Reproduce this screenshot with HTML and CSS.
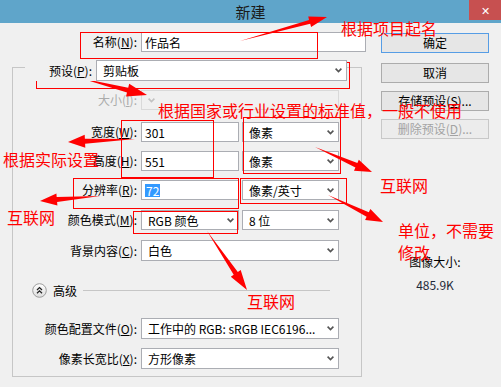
FILE: index.html
```html
<!DOCTYPE html>
<html lang="zh-CN">
<head>
    <meta charset="UTF-8">
    <meta name="viewport" content="width=device-width, initial-scale=1.0">
    <title>新建</title>
    <link rel="stylesheet" href="styles.css">
</head>
<body>
<div class="window">
    <div class="titlebar">
        <span class="title">新建</span>
        <span class="close">✕</span>
    </div>

    <div class="dialog">
        <div class="form">
            <div class="row row-name">
                <span class="lbl">名称(<u>N</u>):</span>
                <div class="field name-field">作品名</div>
            </div>

            <div class="row row-preset">
                <span class="lbl">预设(<u>P</u>):</span>
                <div class="field select preset-field">剪贴板
                    <svg class="chev" viewBox="0 0 7 5"><path d="M0.6 0.6 L3.5 3.6 L6.4 0.6"/></svg>
                </div>
            </div>

            <div class="group">
                <div class="row row-size">
                    <span class="lbl muted">大小(<u>I</u>):</span>
                    <div class="field select w-full off">
                        <svg class="chev" viewBox="0 0 7 5"><path d="M0.6 0.6 L3.5 3.6 L6.4 0.6"/></svg>
                    </div>
                </div>
                <div class="row row-w">
                    <span class="lbl">宽度(<u>W</u>):</span>
                    <div class="field w-half">301</div>
                    <div class="field select w-unit">像素
                        <svg class="chev" viewBox="0 0 7 5"><path d="M0.6 0.6 L3.5 3.6 L6.4 0.6"/></svg>
                    </div>
                </div>
                <div class="row row-h">
                    <span class="lbl">高度(<u>H</u>):</span>
                    <div class="field w-half">551</div>
                    <div class="field select w-unit">像素
                        <svg class="chev" viewBox="0 0 7 5"><path d="M0.6 0.6 L3.5 3.6 L6.4 0.6"/></svg>
                    </div>
                </div>
                <div class="row row-res">
                    <span class="lbl">分辨率(<u>R</u>):</span>
                    <div class="field w-half"><span class="picked">72</span></div>
                    <div class="field select w-unit">像素/英寸
                        <svg class="chev" viewBox="0 0 7 5"><path d="M0.6 0.6 L3.5 3.6 L6.4 0.6"/></svg>
                    </div>
                </div>
                <div class="row row-mode">
                    <span class="lbl">颜色模式(<u>M</u>):</span>
                    <div class="field select w-half">RGB 颜色
                        <svg class="chev" viewBox="0 0 7 5"><path d="M0.6 0.6 L3.5 3.6 L6.4 0.6"/></svg>
                    </div>
                    <div class="field select w-unit">8 位
                        <svg class="chev" viewBox="0 0 7 5"><path d="M0.6 0.6 L3.5 3.6 L6.4 0.6"/></svg>
                    </div>
                </div>
                <div class="row row-bg tall">
                    <span class="lbl">背景内容(<u>C</u>):</span>
                    <div class="field select w-full">白色
                        <svg class="chev" viewBox="0 0 7 5"><path d="M0.6 0.6 L3.5 3.6 L6.4 0.6"/></svg>
                    </div>
                </div>

                <div class="row row-adv">
                    <svg class="toggle" viewBox="0 0 15 15">
                        <defs>
                            <linearGradient id="knob" x1="0" y1="0" x2="0" y2="1">
                                <stop offset="0" stop-color="#ffffff"/>
                                <stop offset="1" stop-color="#dcdcdc"/>
                            </linearGradient>
                        </defs>
                        <circle cx="7.5" cy="7.5" r="6.8" fill="url(#knob)" stroke="#9c9c9c"/>
                        <path d="M5 7 L7.5 4.6 L10 7 M5 10.2 L7.5 7.8 L10 10.2" fill="none" stroke="#222" stroke-width="1.3"/>
                    </svg>
                    <span class="adv-label">高级</span>
                    <span class="adv-line"></span>
                </div>

                <div class="row row-profile tall">
                    <span class="lbl">颜色配置文件(<u>O</u>):</span>
                    <div class="field select w-full">工作中的 RGB: sRGB IEC6196...
                        <svg class="chev" viewBox="0 0 7 5"><path d="M0.6 0.6 L3.5 3.6 L6.4 0.6"/></svg>
                    </div>
                </div>
                <div class="row row-ratio tall">
                    <span class="lbl">像素长宽比(<u>X</u>):</span>
                    <div class="field select w-full">方形像素
                        <svg class="chev" viewBox="0 0 7 5"><path d="M0.6 0.6 L3.5 3.6 L6.4 0.6"/></svg>
                    </div>
                </div>
            </div>
        </div>

        <div class="side">
            <div class="btn btn-ok">确定</div>
            <div class="btn btn-cancel">取消</div>
            <div class="btn btn-save">存储预设(<u>S</u>)...</div>
            <div class="btn btn-del">删除预设(<u>D</u>)...</div>
            <div class="info">图像大小:</div>
            <div class="info info-size">485.9K</div>
        </div>
    </div>

    <!-- red annotations drawn on top of the screenshot -->
    <div class="notes">
        <svg id="marks" class="marks" width="501" height="387" viewBox="0 0 501 387">
            <rect x="80.5" y="32.5" width="237" height="26"/>
            <rect x="36.5" y="62.5" width="313" height="26"/>
            <rect x="121.5" y="120.5" width="92" height="57"/>
            <rect x="243.5" y="117.5" width="97" height="56"/>
            <rect x="73.5" y="178.5" width="165" height="30"/>
            <rect x="240.5" y="178.5" width="106" height="25"/>
            <rect x="133.5" y="211.5" width="104" height="22"/>
        </svg>
        <div class="note n-name">根据项目起名</div>
        <div class="note n-preset">根据国家或行业设置的标准值，一般不使用</div>
        <div class="note n-size">根据实际设置</div>
        <div class="note n-res">互联网</div>
        <div class="note n-unit">互联网</div>
        <div class="note n-resunit">单位，不需要<br>修改</div>
        <div class="note n-mode">互联网</div>
    </div>
</div>

<script>
    // x1, y1 (tail), x2, y2 (tip), shaft width, head width, head length
    const arrows = [
        [240, 41, 327, 17, 4, 11, 18],
        [80, 78, 147, 95, 5, 13, 20],
        [135, 139, 68, 142, 5, 13, 17],
        [100, 196, 40, 201, 5, 12, 17],
        [315, 147, 372, 172, 5, 12, 17],
        [328, 195, 383, 222, 5, 12, 17],
        [207, 231, 247, 290, 5, 12, 20]
    ];

    const marks = document.getElementById('marks');

    arrows.forEach(([x1, y1, x2, y2, shaft, head, len]) => {
        const d = Math.hypot(x2 - x1, y2 - y1);
        const ux = (x2 - x1) / d, uy = (y2 - y1) / d;
        const nx = -uy, ny = ux;
        const bx = x2 - ux * len, by = y2 - uy * len;
        const pts = [
            [x1, y1],
            [bx + nx * shaft / 2, by + ny * shaft / 2],
            [bx + nx * head / 2, by + ny * head / 2],
            [x2, y2],
            [bx - nx * head / 2, by - ny * head / 2],
            [bx - nx * shaft / 2, by - ny * shaft / 2]
        ];
        const poly = document.createElementNS('http://www.w3.org/2000/svg', 'polygon');
        poly.setAttribute('points', pts.map(p => p[0].toFixed(1) + ',' + p[1].toFixed(1)).join(' '));
        marks.appendChild(poly);
    });
</script>
</body>
</html>
```

FILE: styles.css
```css
* {
    box-sizing: border-box;
}
body {
    margin: 0;
    width: 501px;
    height: 387px;
    overflow: hidden;
    background: #f0f0f0;
    font-family: "Noto Sans CJK SC", "Microsoft YaHei", sans-serif;
    font-size: 12px;
    color: #000;
}
.window {
    position: relative;
    width: 501px;
    height: 387px;
}
.titlebar {
    position: relative;
    height: 23px;
    background: #5fa5ca;
    text-align: center;
}
.title {
    font-size: 15px;
    line-height: 23px;
    color: #1a1a1a;
}
.close {
    position: absolute;
    top: 0;
    right: 0;
    width: 32px;
    height: 20px;
    background: #c75050;
    color: #fff;
    font-size: 11px;
    line-height: 20px;
    text-align: center;
}

.dialog {
    display: flex;
    padding-top: 9px;
}
.form {
    width: 370px;
}
.row {
    display: flex;
    align-items: center;
    height: 20px;
}
.row.tall {
    height: 21px;
}
.lbl {
    width: 124px;
    margin-right: 4px;
    text-align: right;
    white-space: nowrap;
    line-height: 20px;
}
.lbl.muted {
    color: #ababab;
}
.row-name .lbl {
    width: 137px;
}

.field {
    height: 20px;
    padding: 0 3px;
    border: 1px solid #abadb3;
    background: #fff;
    display: flex;
    align-items: center;
    white-space: nowrap;
    overflow: hidden;
}
.tall .field {
    height: 21px;
}
.select {
    padding: 0 4px 0 6px;
    justify-content: space-between;
}
.chev {
    width: 7px;
    height: 5px;
    flex: none;
}
.chev path {
    fill: none;
    stroke: #555;
    stroke-width: 1.6;
}
.field.off {
    background: #f0f0f0;
    border-color: #d9d9d9;
}
.field.off .chev path {
    stroke: #c2c2c2;
}
.picked {
    background: #3399ff;
    color: #fff;
    padding: 0 1px;
    line-height: 13px;
}

.name-field {
    width: 225px;
}
.row-preset {
    position: relative;
    z-index: 1;
    width: 322px;
    height: 21px;
    margin: 8px 0 -14px 25px;
    background: #f0f0f0;
}
.row-preset .lbl {
    width: 67px;
}
.preset-field {
    width: 251px;
    height: 21px;
}

.group {
    width: 350px;
    height: 310px;
    margin-left: 12px;
    border: 1px solid #c6c6c6;
}
.w-full {
    width: 198px;
}
.w-half {
    width: 98px;
}
.w-unit {
    width: 97px;
    margin-left: 3px;
}
.row-size { margin-top: 22px; }
.row-w { margin-top: 12px; }
.row-h { margin-top: 9px; }
.row-res { margin-top: 9px; }
.row-mode { margin-top: 10px; }
.row-bg { margin-top: 10px; }
.row-profile { margin-top: 20px; }
.row-ratio { margin-top: 9px; }

.row-adv {
    height: 15px;
    margin-top: 22px;
    padding-left: 19px;
}
.toggle {
    width: 15px;
    height: 15px;
    flex: none;
}
.adv-label {
    margin-left: 6px;
    line-height: 15px;
}
.adv-line {
    flex: 1;
    height: 1px;
    margin: 0 31px 0 6px;
    background: #c6c6c6;
}

.side {
    width: 108px;
    margin-left: 11px;
    display: flex;
    flex-direction: column;
}
.btn {
    height: 20px;
    border: 1px solid #acacac;
    background: #e6e6e6;
    text-align: center;
    line-height: 18px;
    white-space: nowrap;
}
.btn-ok {
    margin-top: 1px;
    border-color: #569de5;
}
.btn-cancel {
    margin-top: 10px;
}
.btn-save,
.btn-del {
    margin-top: 8px;
}
.btn-del {
    color: #a3a3a3;
    border-color: #c8c8c8;
    background: #ececec;
}
.info {
    margin-top: 115px;
    text-align: center;
    line-height: 16px;
}
.info-size {
    margin-top: 7px;
    color: #1e2a3a;
}

/* annotations */
.notes {
    position: absolute;
    inset: 0;
    pointer-events: none;
}
.marks {
    position: absolute;
    left: 0;
    top: 0;
}
.marks rect {
    fill: none;
    stroke: #ff0000;
    stroke-width: 1;
}
.marks polygon {
    fill: #ff0000;
}
.note {
    position: absolute;
    color: #ff0000;
    font-size: 16px;
    line-height: 16px;
    white-space: nowrap;
}
.n-name { left: 341px; top: 20px; }
.n-preset { left: 158px; top: 102px; }
.n-size { left: 3px; top: 151px; }
.n-res { left: 7px; top: 209px; }
.n-unit { left: 380px; top: 177px; }
.n-resunit { left: 398px; top: 219px; line-height: 22px; }
.n-mode { left: 247px; top: 293px; }
```
